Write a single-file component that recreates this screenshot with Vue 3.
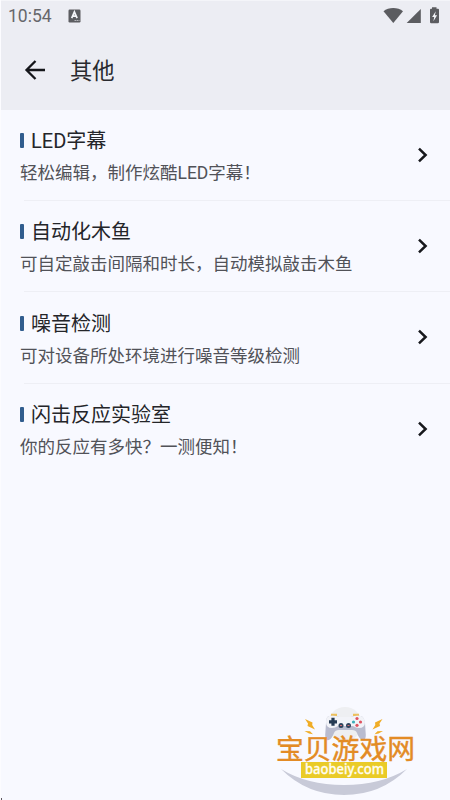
<script setup>
const items = [
  { title: 'LED字幕', description: '轻松编辑，制作炫酷LED字幕！' },
  { title: '自动化木鱼', description: '可自定敲击间隔和时长，自动模拟敲击木鱼' },
  { title: '噪音检测', description: '可对设备所处环境进行噪音等级检测' },
  { title: '闪击反应实验室', description: '你的反应有多快？一测便知！' },
]
</script>

<template>
  <div class="screen">
    <header class="header">
      <div class="status">
        <span class="time">10:54</span>
        <svg class="input-icon" width="13" height="14" viewBox="0 0 13 14">
          <rect x="0.5" y="0.5" width="12" height="13" rx="1.2" fill="#5c5d61" />
          <path d="M3.7 9.2 6.4 3 9.1 9.2M4.7 7.2h3.4" fill="none" stroke="#f4f5f9" stroke-width="1.7" />
          <path d="M6.5 11.5h5" stroke="#b5b6bb" stroke-width="1" stroke-dasharray="1.5 .5" />
        </svg>
        <svg class="signals" width="60" height="20" viewBox="0 0 60 20">
          <path d="M0.5 5.2C5.5.8 15 .8 20 5.2L10.3 17Z" fill="#5b5c60" />
          <path d="M37.8 3v14H23.7Z" fill="#5b5c60" />
          <path d="M49 1.3h4.500v1.5H55q1 0 1 1V16q0 1.3-1.3 1.3h-6.400Q47 17.300 47 16V3.800q0-1 1-1h1Z" fill="#5b5c60" />
          <path d="M52.800 5.300 49.100 11h2.100l-.8 4.300 3.700-6h-2.200Z" fill="#f4f5f9" />
        </svg>
      </div>
      <div class="toolbar">
        <svg class="back" width="22" height="22" viewBox="0 0 22 22">
          <path d="M21 11H2.500M11.500 2 2.500 11l9 9" fill="none" stroke="#15161a" stroke-width="2.300" />
        </svg>
        <h1>其他</h1>
      </div>
    </header>

    <main>
      <div v-for="item in items" :key="item.title" class="item">
        <div class="copy">
          <div class="title"><i class="marker"></i><span>{{ item.title }}</span></div>
          <p>{{ item.description }}</p>
        </div>
        <svg class="chevron" width="12" height="16" viewBox="0 0 12 16">
          <path d="M2 1.600 8.600 8 2 14.400" fill="none" stroke="#17181c" stroke-width="2.500" />
        </svg>
      </div>
    </main>

    <svg class="brand" width="165" height="100" viewBox="0 0 165 100">
      <circle cx="80" cy="24" r="17" fill="#eeeff2" />
      <path d="M16 69Q42 85 79 85t63-16Q116 95 79 95T16 69Z" fill="#c8cad8" />
      <path d="M66 15h6M88 15h6" stroke="#edc05b" stroke-width="2.500" />
      <path d="M64 16q6-1 10 1h12q5-2 10-1 3 1 4 7l.8 12q0 6-3.500 5-3-1-5.300-7-1-3-5-3H74q-4 0-5 3-2.300 6-5.300 7-3.500 1-3.500-5L61 23Q61 17 64 16Z" fill="#b9bccf" />
      <path d="M64 16q6-1 10 1h12q5-2 10-1 3 1 4 6 0 6-6 6-3 0-6-2H73q-3 2-6 2-6 0-6-6 0-5 3-6Z" fill="#f2f3f8" />
      <path d="M68 17.800v8M64 21.800h8" stroke="#253b54" stroke-width="3.200" />
      <circle cx="76" cy="25.500" r="2.500" fill="#30445d" />
      <circle cx="83.500" cy="25.500" r="2.500" fill="#30445d" />
      <path d="M75 25.500h2M82.500 25.500h2" stroke="#d26a70" />
      <circle cx="92" cy="18.500" r="1.600" fill="#df5260" />
      <circle cx="92" cy="25.300" r="1.600" fill="#df5260" />
      <circle cx="88.500" cy="22" r="1.600" fill="#3baeb9" />
      <circle cx="95.500" cy="22" r="1.600" fill="#df5260" />
      <path d="m40 19 7.500 3.500-.3 2.400L50 29.500 42.500 26l.5-2.500ZM39.500 31l5.500.3 3 3-4-.8ZM117.500 19l-7.500 3.500.3 2.400-2.800 4.600L115 26l-.5-2.500ZM118 31l-5.500.3-3 3 4-.8Z" fill="#f0ad27" />
      <text class="brand-name" x="11" y="58.500" textLength="139" lengthAdjust="spacingAndGlyphs">宝贝游戏网</text>
      <rect x="36" y="62" width="86" height="16" fill="#eacb27" />
      <text class="brand-url" x="40" y="74" textLength="79" lengthAdjust="spacingAndGlyphs">baobeiy.com</text>
    </svg>
    <i class="corner"></i>
  </div>
</template>

<style>
body { margin: 0; overflow: hidden; }
</style>

<style scoped>
.screen {
  position: relative;
  box-sizing: border-box;
  width: 450px;
  height: 800px;
  overflow: hidden;
  background: #f8f9ff;
  border-left: 1px solid #fcfcff;
  font-family: Roboto, "Noto Sans CJK SC", sans-serif;
}
.header { height: 109.700px; background: #ecedf3; border-top: 1px solid #f4f5f9; box-sizing: border-box; }
.status { height: 30px; display: flex; align-items: center; padding: 0 7px 0 7px; }
.time { font: 400 17.500px/30px Roboto, sans-serif; color: #66676b; width: 60px; }
.input-icon { display: block; }
.signals { display: block; margin-left: auto; }
.toolbar { height: 78px; display: flex; align-items: center; padding-left: 23px; }
.back { display: block; }
h1 { margin: 1px 0 0 24px; font-size: 22.300px; line-height: 32px; font-weight: 400; color: #292a2f; }
.item {
  box-sizing: border-box;
  height: 91.300px;
  display: flex;
  align-items: center;
  justify-content: space-between;
  padding: 2px 21px 0 19px;
  background: linear-gradient(#eeeff5, #eeeff5) 23px 100% / 100% 1px no-repeat;
}
.item:last-child { background: none; }
.copy { padding-top: 1.500px; }
.title { height: 32px; display: flex; align-items: center; gap: 7.500px; font-size: 20px; line-height: 32px; color: #242529; }
.marker { width: 3.500px; height: 15px; margin-bottom: 1px; border-radius: 1px; background: #315d8e; }
p { margin: 0; font-size: 17.500px; line-height: 32px; color: #515258; white-space: nowrap; }
.chevron { display: block; margin-bottom: 3px; }
.brand { position: absolute; left: 264px; top: 700px; }
.brand-name { font-family: "Noto Sans CJK SC", sans-serif; font-size: 27px; font-weight: 400; fill: #e38b25; stroke: #e38b25; stroke-width: .4px; }
.brand-url { font-family: "Noto Sans", sans-serif; font-size: 14.500px; font-weight: 500; fill: #fffdf0; stroke: #fffdf0; stroke-width: .3px; }
.corner { position: absolute; left: -1px; bottom: 0; width: 2px; height: 2px; background: #5b555c; }
</style>
